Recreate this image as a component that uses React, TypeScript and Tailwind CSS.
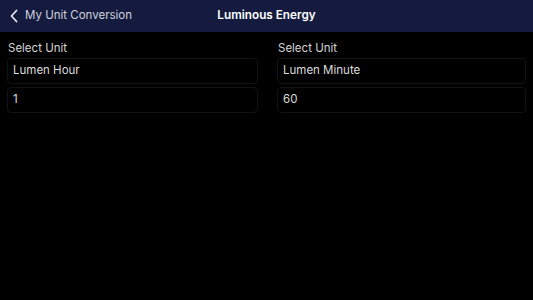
import React from 'react';

const font = { fontFamily: '"Inter", "Liberation Sans", sans-serif' };

const UnitColumn: React.FC<{ unit: string; value: string }> = ({ unit, value }) => (
  <div className="flex flex-col">
    <div className="h-[25px] pt-[8px] pl-[1px] text-[11.5px] leading-[16px] text-[#d4d4d4]">Select Unit</div>
    <div className="mt-[1px] h-[26px] rounded-[4px] border border-[#131313] flex items-center px-[5px] text-[11.5px] text-[#dcdcdc]">
      {unit}
    </div>
    <div className="mt-[3px] h-[26px] rounded-[4px] border border-[#131313] flex items-center px-[5px] text-[11.5px] text-[#dcdcdc]">
      {value}
    </div>
  </div>
);

export default function App() {
  return (
    <div className="w-[533px] h-[300px] bg-black overflow-hidden" style={font}>
      <div className="relative h-[32px] bg-[#141b3f] flex items-center">
        <div className="flex items-center pl-[9px] gap-[6px] text-[#d0d3dc] text-[11.5px]">
          <svg width="10" height="14" viewBox="0 0 10 14" fill="none">
            <path d="M7.5 1.5L2.5 7l5 5.5" stroke="#e4e6ee" strokeWidth="1.8" strokeLinecap="round" strokeLinejoin="round" />
          </svg>
          <span>My Unit Conversion</span>
        </div>
        <div className="absolute left-0 right-0 text-center text-white font-semibold text-[11.75px] pointer-events-none">
          Luminous Energy
        </div>
      </div>
      <div className="grid grid-cols-[251px_249px] gap-[19px] px-[7px]">
        <UnitColumn unit="Lumen Hour" value="1" />
        <UnitColumn unit="Lumen Minute" value="60" />
      </div>
    </div>
  );
}
